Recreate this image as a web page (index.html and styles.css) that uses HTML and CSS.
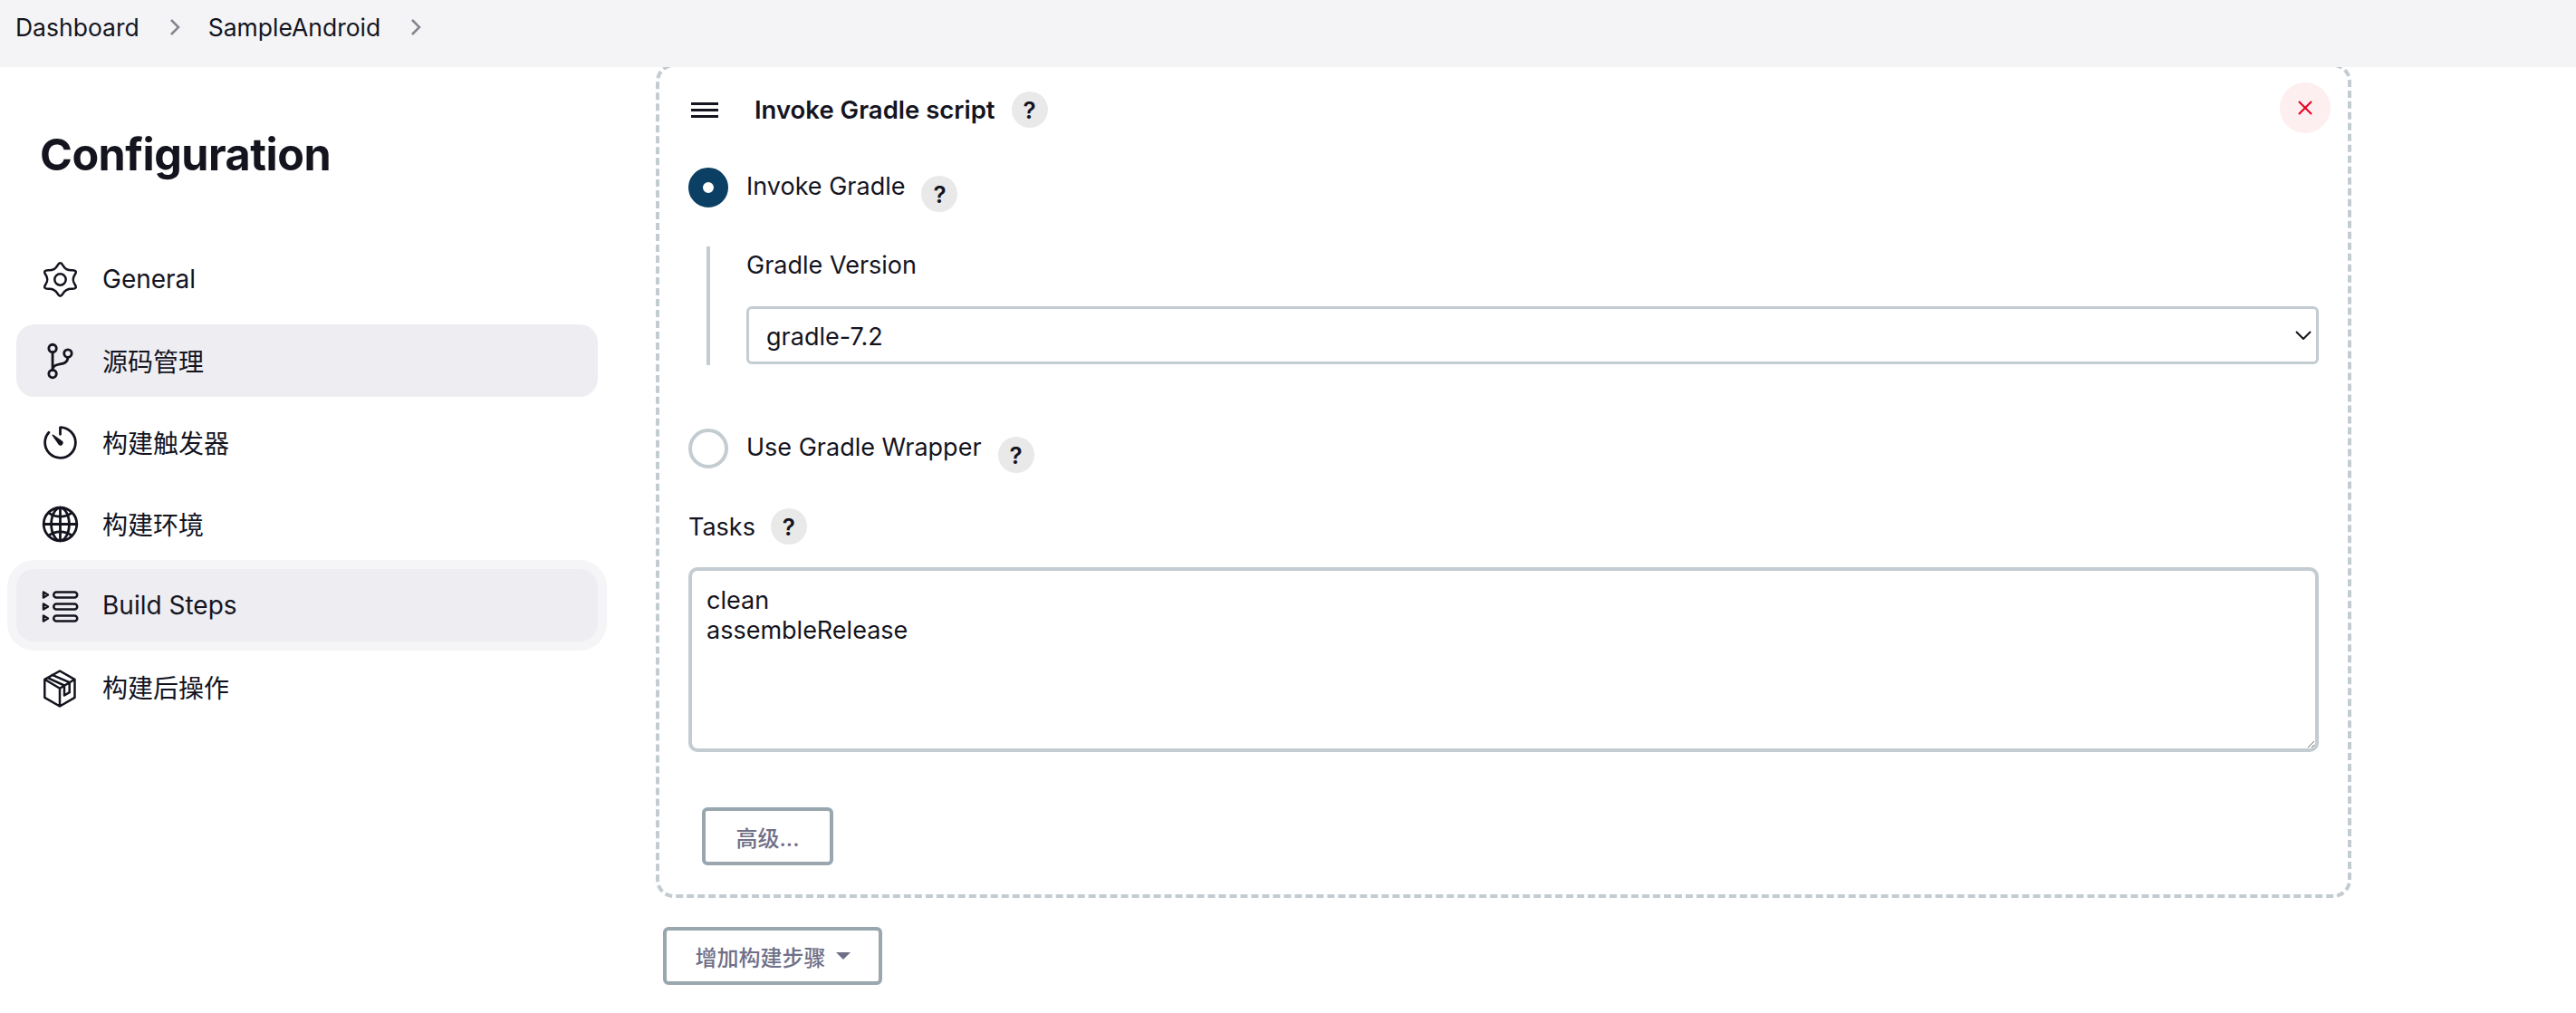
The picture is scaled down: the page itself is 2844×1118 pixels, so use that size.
FILE: index.html
```html
<!DOCTYPE html>
<html lang="en">
<head>
    <meta charset="UTF-8">
    <meta name="viewport" content="width=device-width, initial-scale=1.0">
    <title>SampleAndroid Config</title>
    <link rel="stylesheet" href="styles.css">
</head>
<body>
    <header class="topbar">
        <a class="crumb">Dashboard</a>
        <svg class="crumb-sep" viewBox="0 0 12 18"><path d="M2 1l8 8-8 8"/></svg>
        <a class="crumb">SampleAndroid</a>
        <svg class="crumb-sep" viewBox="0 0 12 18"><path d="M2 1l8 8-8 8"/></svg>
    </header>

    <div class="page">
        <aside class="sidebar">
            <h1 class="page-title">Configuration</h1>
            <nav class="side-nav">
                <a class="side-item">
                    <svg class="side-icon" viewBox="-2.5 -2.5 45 45"><path class="thin" d="M16.9 4.52Q20-1 23.1 4.52 26.21 10.04 32.93 9.77 39.64 9.5 36.03 14.75 32.42 20 36.03 25.25 39.64 30.5 32.93 30.23 26.21 29.96 23.1 35.48 20 41 16.9 35.48 13.79 29.96 7.07 30.23 .36 30.5 3.97 25.25 7.58 20 3.97 14.75 .36 9.5 7.07 9.77 13.79 10.04 16.9 4.52z"/><circle class="thin" cx="20" cy="20" r="6.200"/></svg>
                    General
                </a>
                <a class="side-item is-hover">
                    <svg class="side-icon" viewBox="0 0 512 512"><circle cx="160" cy="96" r="48"/><circle cx="160" cy="416" r="48"/><path d="M160 368V144"/><circle cx="352" cy="160" r="48"/><path d="M352 208c0 128-192 48-192 160"/></svg>
                    源码管理
                </a>
                <a class="side-item">
                    <svg class="side-icon" viewBox="0 0 512 512"><path d="M112.91 128A191.85 191.85 0 0064 254c-1.18 106.35 85.65 193.8 192 194 106.2.2 192-85.83 192-192 0-104.54-83.55-189.61-187.5-192a4.36 4.36 0 00-4.5 4.37V152"/><path class="icon-fill" d="M233.38 278.63l-79-113a8.13 8.13 0 0111.32-11.32l113 79a32.5 32.5 0 01-37 53.34 33.21 33.21 0 01-8.32-8.02z"/></svg>
                    构建触发器
                </a>
                <a class="side-item">
                    <svg class="side-icon" viewBox="0 0 512 512"><path d="M256 48C141.13 48 48 141.13 48 256s93.13 208 208 208 208-93.13 208-208S370.87 48 256 48z"/><path d="M256 48c-58.07 0-112.67 93.13-112.67 208S197.93 464 256 464s112.67-93.13 112.67-208S314.07 48 256 48z"/><path d="M117.33 117.33c38.24 27.15 86.38 43.34 138.67 43.34s100.43-16.19 138.67-43.34M394.67 394.67c-38.24-27.15-86.38-43.34-138.67-43.34s-100.43 16.19-138.67 43.34"/><path d="M256 48v416M464 256H48"/></svg>
                    构建环境
                </a>
                <a class="side-item is-current">
                    <svg class="side-icon" viewBox="-2.5 -2.5 45 45"><path class="thin" d="M1.500 5l5 3-5 3zM1.500 18l5 3-5 3zM1.500 31l5 3-5 3z"/><rect class="thin" x="12.750" y="5" width="26" height="6" rx="3"/><rect class="thin" x="12.750" y="18" width="26" height="6" rx="3"/><rect class="thin" x="12.750" y="31" width="26" height="6" rx="3"/></svg>
                    Build Steps
                </a>
                <a class="side-item">
                    <svg class="side-icon" viewBox="-2.5 -2.5 45 45"><path class="thin" d="M19.500 2L36 11.300v20L19.500 41 2.800 31.300v-20zM2.800 11.300l16.700 10 16.500-10M19.500 21.300V41M11.200 6.300l19 8.400v11l-5.700 3.300V18L6.200 9.700"/></svg>
                    构建后操作
                </a>
            </nav>
        </aside>

        <main class="content">
            <section class="step-card">
                <button class="close-btn" type="button">
                    <svg viewBox="0 0 16 16"><path d="M1 1l14 14M15 1L1 15"/></svg>
                </button>

                <div class="step-head">
                    <span class="drag-handle"></span>
                    <b class="step-title">Invoke Gradle script</b>
                    <span class="help">?</span>
                </div>

                <div class="radio-row row-invoke">
                    <span class="radio is-on"></span>
                    <label class="radio-label">Invoke Gradle</label>
                    <span class="help help-low">?</span>
                </div>

                <div class="nested">
                    <label class="field-label">Gradle Version</label>
                    <div class="select-wrap">
                        <select class="select">
                            <option>gradle-7.2</option>
                        </select>
                        <svg class="select-arrow" viewBox="0 0 18 10"><path d="M1 1l8 8 8-8"/></svg>
                    </div>
                </div>

                <div class="radio-row row-wrapper">
                    <span class="radio"></span>
                    <label class="radio-label">Use Gradle Wrapper</label>
                    <span class="help help-low">?</span>
                </div>

                <div class="tasks-label">
                    <label>Tasks</label>
                    <span class="help">?</span>
                </div>
                <textarea class="tasks" spellcheck="false">clean
assembleRelease</textarea>

                <button class="btn btn-advanced" type="button">高级...</button>
            </section>

            <button class="btn btn-add" type="button">增加构建步骤<span class="caret"></span></button>
        </main>
    </div>
</body>
</html>
```

FILE: styles.css
```css
* {
    box-sizing: border-box;
}

html, body {
    margin: 0;
    background-color: #fff;
}

body {
    font-family: 'Inter', 'Noto Sans CJK SC', sans-serif;
    font-size: 28px;
    color: #14141f;
}

/* breadcrumb bar, the card slides under it */
.topbar {
    position: relative;
    z-index: 2;
    display: flex;
    align-items: flex-start;
    height: 74px;
    padding: 13px 0 0 17px;
    background-color: #f4f4f6;
    font-size: 26.5px;
    line-height: 34px;
}

.crumb-sep {
    width: 12px;
    height: 18px;
    margin: 8px 31px 0 33px;
    fill: none;
    stroke: #85858f;
    stroke-width: 2.5;
}

.page {
    display: flex;
    align-items: flex-start;
}

.sidebar {
    width: 724px;
    flex: none;
    padding-left: 18px;
}

.page-title {
    margin: 67px 0 67px 26px;
    font-size: 48.5px;
    line-height: 60px;
    font-weight: 700;
    letter-spacing: -0.5px;
}

.side-nav {
    display: flex;
    flex-direction: column;
    gap: 10px;
    width: 642px;
}

.side-item {
    display: flex;
    align-items: center;
    gap: 24px;
    height: 80px;
    padding-left: 26px;
    border-radius: 20px;
}

.side-item.is-hover {
    background-color: #eeeef2;
}

.side-item.is-current {
    background-color: #eeeef2;
    box-shadow: 0 0 0 10px #f5f5f7;
}

.side-icon {
    width: 45px;
    height: 45px;
    flex: none;
    fill: none;
    stroke: #14141f;
    stroke-width: 32;
    stroke-linecap: round;
    stroke-linejoin: round;
}

.side-icon .thin {
    stroke-width: 2.5;
}

.side-icon .icon-fill {
    fill: #14141f;
    stroke: none;
}

.content {
    width: 1872px;
    margin-top: -4px;
    font-size: 27px;
}

.step-card {
    position: relative;
    padding: 27px 32px 32px;
    border: 4px dashed #c3ccd1;
    border-radius: 20px;
}

.close-btn {
    position: absolute;
    top: 17px;
    right: 19px;
    display: flex;
    align-items: center;
    justify-content: center;
    width: 56px;
    height: 56px;
    padding: 0;
    border: none;
    border-radius: 50%;
    background-color: #fdeef0;
}

.close-btn svg {
    width: 16px;
    height: 16px;
    fill: none;
    stroke: #e6001f;
    stroke-width: 2;
}

.step-head {
    display: flex;
    align-items: center;
    height: 40px;
}

.drag-handle {
    width: 30px;
    height: 17px;
    margin: 0 40px 0 3px;
    border-top: 3px solid #14141f;
    border-bottom: 3px solid #14141f;
    background: linear-gradient(#14141f, #14141f) center / 100% 3px no-repeat;
}

.step-title {
    font-size: 27.5px;
    font-weight: 600;
}

.help {
    display: flex;
    align-items: center;
    justify-content: center;
    width: 40px;
    height: 40px;
    flex: none;
    margin-left: 18px;
    border-radius: 50%;
    background-color: #e9e9e9;
    font-size: 26px;
    font-weight: 600;
}

.help-low {
    margin-top: 9px;
    margin-left: 18px;
}

.radio-row {
    display: flex;
    align-items: flex-start;
    height: 44px;
}

.row-invoke {
    margin-top: 44px;
}

.row-wrapper {
    margin-top: 70px;
}

.radio {
    width: 44px;
    height: 44px;
    flex: none;
    margin-right: 20px;
    border: 4px solid #c3ccd1;
    border-radius: 50%;
    background-color: #fff;
}

.radio.is-on {
    border: 16px solid #0b3f63;
}

.radio-label {
    line-height: 42px;
}

.nested {
    margin: 43px 0 0 20px;
    padding: 4px 0 1px 40px;
    border-left: 4px solid #c3ccd1;
}

.field-label {
    display: block;
    line-height: 34px;
}

.select-wrap {
    position: relative;
    margin-top: 28px;
}

.select {
    display: block;
    width: 100%;
    height: 64px;
    padding: 2px 60px 0 19px;
    border: 3px solid #c3ccd1;
    border-radius: 6px;
    background-color: #fff;
    font: inherit;
    color: inherit;
    appearance: none;
}

.select-arrow {
    position: absolute;
    top: 27px;
    right: 8px;
    width: 18px;
    height: 10px;
    fill: none;
    stroke: #14141f;
    stroke-width: 2;
}

.tasks-label {
    display: flex;
    align-items: center;
    margin: 44px 0 25px 0;
    height: 40px;
}

.tasks-label .help {
    margin-left: 17px;
}

.tasks {
    display: block;
    width: 100%;
    height: 204px;
    padding: 16px;
    border: 4px solid #c3ccd1;
    border-radius: 10px;
    font: inherit;
    line-height: 33px;
    color: inherit;
    outline: none;
}

.btn {
    display: flex;
    align-items: center;
    justify-content: center;
    height: 64px;
    padding: 0;
    border: 4px solid #9aa7af;
    border-radius: 6px;
    background-color: #fff;
    font-family: inherit;
    font-size: 24px;
    font-weight: 500;
    color: #6f7088;
}

.btn-advanced {
    width: 145px;
    margin: 61px 0 0 15px;
}

.btn-add {
    width: 242px;
    margin: 32px 0 0 8px;
}

.caret {
    width: 0;
    height: 0;
    margin-left: 11px;
    border-top: 8px solid #6f7088;
    border-left: 8px solid transparent;
    border-right: 8px solid transparent;
}
```
